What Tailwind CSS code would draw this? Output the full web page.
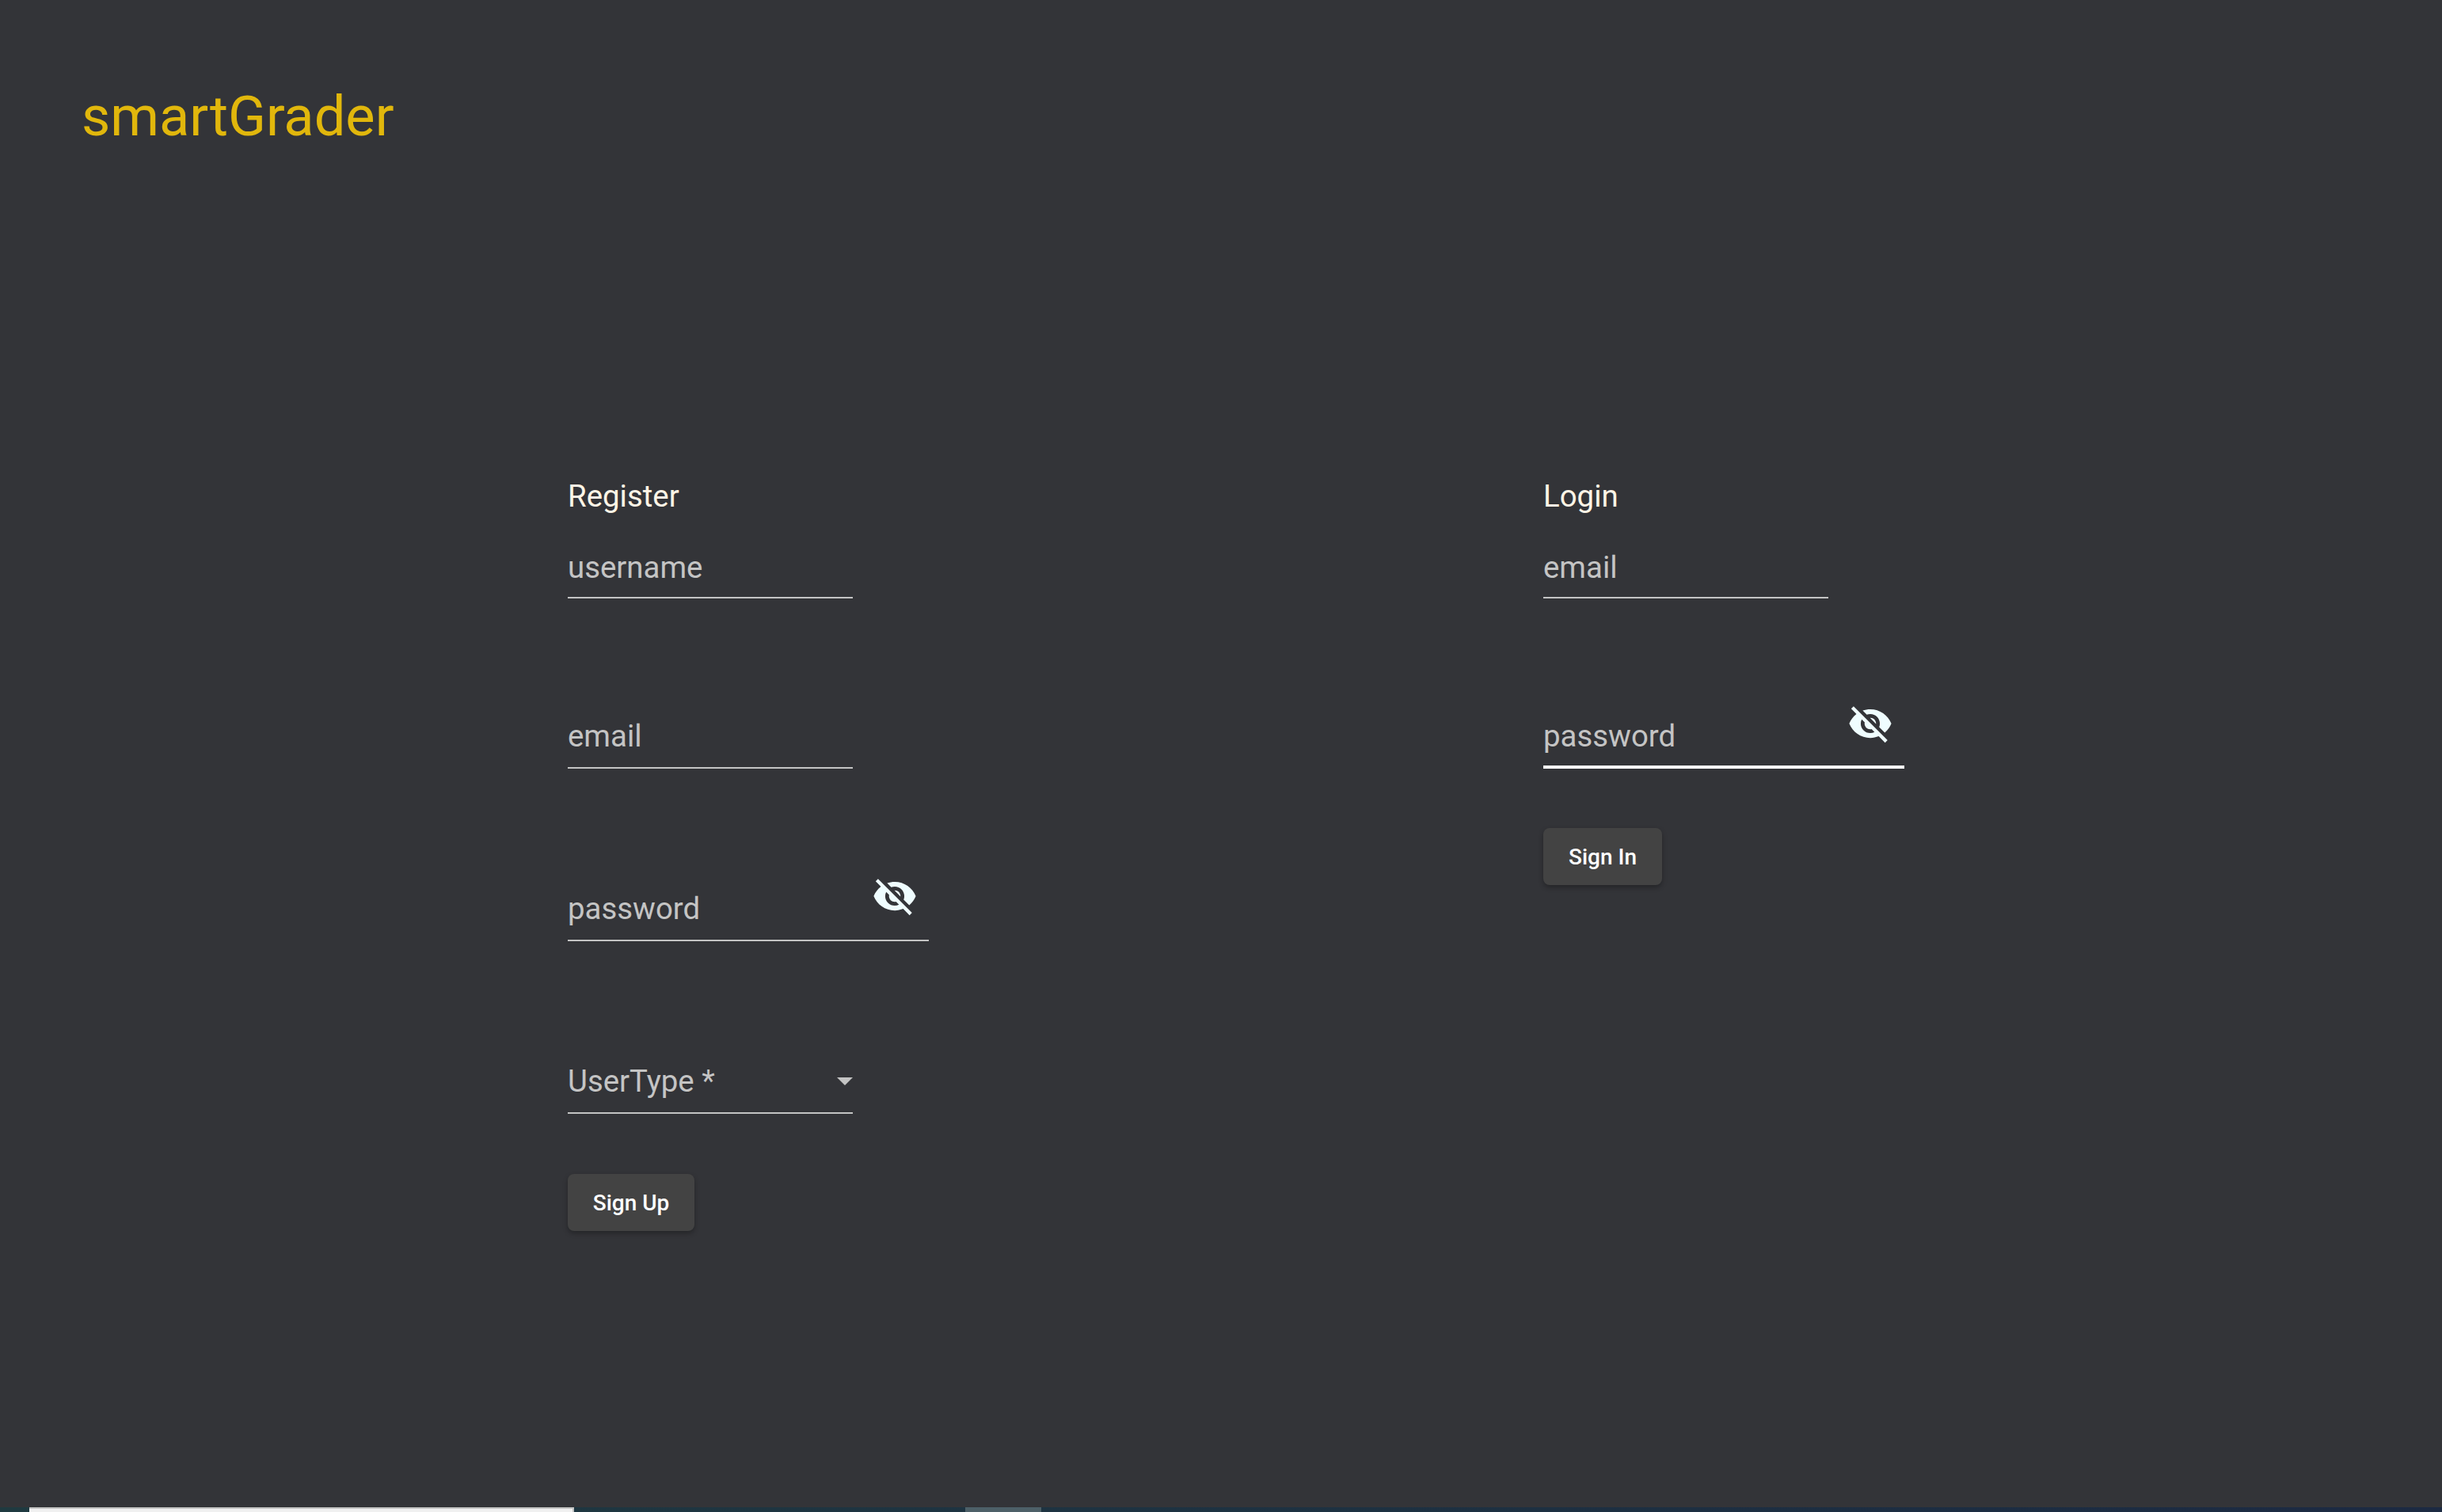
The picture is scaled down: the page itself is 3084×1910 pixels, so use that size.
<!DOCTYPE html>
<html lang="en">
<head>
    <meta charset="UTF-8">
    <title>smartGrader</title>
    <script src="https://cdn.jsdelivr.net/npm/@tailwindcss/browser@4"></script>
</head>
<body class="bg-[#333438] h-[1910px] overflow-hidden font-['Roboto',sans-serif] flex flex-col">
    <header class="h-[320px] pl-[103px] pt-[107px]">
        <h1 class="text-[70.4px] leading-[80px] font-normal text-[#e1b70c]">smartGrader</h1>
    </header>

    <main class="flex-1 flex pl-[717px] pt-[283px]">
        <!-- register -->
        <section class="w-[1232px]">
            <h2 class="text-[38.4px] leading-[48px] text-[#fff5e6] mb-[25px]">Register</h2>
            <div class="w-[360px] h-[80px] border-b-2 border-[#c4c4c4] pt-[17px] text-[38.4px] leading-[48px] text-[#c4c4c4]">username</div>
            <div class="w-[360px] h-[80px] mt-[135px] border-b-2 border-[#c4c4c4] pt-[15px] text-[38.4px] leading-[48px] text-[#c4c4c4]">email</div>
            <div class="relative w-[456px] h-[80px] mt-[138px] border-b-2 border-[#c4c4c4] pt-[15px] text-[38.4px] leading-[48px] text-[#c4c4c4]">
                password
                <svg class="absolute right-[14px] top-[-6px] w-[58px] h-[58px]" viewBox="0 0 24 24" fill="#effdff"><path d="M12 7c2.76 0 5 2.24 5 5 0 .65-.13 1.26-.36 1.83l2.92 2.92c1.51-1.26 2.7-2.89 3.43-4.75-1.73-4.39-6-7.5-11-7.5-1.4 0-2.74.25-3.98.7l2.16 2.16C10.74 7.13 11.35 7 12 7zM2 4.27l2.28 2.28.46.46C3.08 8.3 1.78 10.02 1 12c1.73 4.39 6 7.5 11 7.5 1.55 0 3.03-.3 4.38-.84l.42.42L19.73 22 21 20.73 3.27 3 2 4.27zM7.53 9.8l1.55 1.55c-.05.21-.08.43-.08.65 0 1.66 1.34 3 3 3 .22 0 .44-.03.65-.08l1.55 1.55c-.67.33-1.41.53-2.2.53-2.76 0-5-2.24-5-5 0-.79.2-1.53.53-2.2zm4.31-.78l3.15 3.15.02-.16c0-1.66-1.34-3-3-3l-.17.01z"/></svg>
            </div>
            <div class="relative w-[360px] h-[80px] mt-[138px] border-b-2 border-[#c4c4c4] pt-[15px] text-[38.4px] leading-[48px] text-[#c4c4c4]">
                UserType *
                <svg class="absolute right-[-14px] top-[14px] w-[48px] h-[48px]" viewBox="0 0 24 24" fill="#c4c4c4"><path d="M7 10l5 5 5-5z"/></svg>
            </div>
            <button class="mt-[76px] w-[160px] h-[72px] pt-[2px] rounded-[8px] bg-[#434343] text-white text-[28px] font-medium shadow-[0_3px_6px_rgba(0,0,0,0.3)]">Sign Up</button>
        </section>

        <!-- login -->
        <section>
            <h2 class="text-[38.4px] leading-[48px] text-[#fff5e6] mb-[25px]">Login</h2>
            <div class="w-[360px] h-[80px] border-b-2 border-[#c4c4c4] pt-[17px] text-[38.4px] leading-[48px] text-[#c4c4c4]">email</div>
            <div class="relative w-[456px] h-[80px] mt-[135px] border-b-4 border-white pt-[15px] text-[38.4px] leading-[48px] text-[#c4c4c4]">
                password
                <svg class="absolute right-[14px] top-[-6px] w-[58px] h-[58px]" viewBox="0 0 24 24" fill="#effdff"><path d="M12 7c2.76 0 5 2.24 5 5 0 .65-.13 1.26-.36 1.83l2.92 2.92c1.51-1.26 2.7-2.89 3.43-4.75-1.73-4.39-6-7.5-11-7.5-1.4 0-2.74.25-3.98.7l2.16 2.16C10.74 7.13 11.35 7 12 7zM2 4.27l2.28 2.28.46.46C3.08 8.3 1.78 10.02 1 12c1.73 4.39 6 7.5 11 7.5 1.55 0 3.03-.3 4.38-.84l.42.42L19.73 22 21 20.73 3.27 3 2 4.27zM7.53 9.8l1.55 1.55c-.05.21-.08.43-.08.65 0 1.66 1.34 3 3 3 .22 0 .44-.03.65-.08l1.55 1.55c-.67.33-1.41.53-2.2.53-2.76 0-5-2.24-5-5 0-.79.2-1.53.53-2.2zm4.31-.78l3.15 3.15.02-.16c0-1.66-1.34-3-3-3l-.17.01z"/></svg>
            </div>
            <button class="mt-[75px] w-[150px] h-[72px] pt-[2px] rounded-[8px] bg-[#434343] text-white text-[28px] font-medium shadow-[0_3px_6px_rgba(0,0,0,0.3)]">Sign In</button>
        </section>
    </main>

    <!-- strip along the bottom -->
    <div class="h-[6px] bg-linear-to-r from-[#1f3a40] to-[#1c2a42] flex">
        <div class="ml-[37px] w-[688px] bg-[#f0f0f0] border-t-2 border-r-2 border-[#c4c4c4]"></div>
        <div class="ml-[494px] w-[96px] bg-[#4d6068]"></div>
    </div>
</body>
</html>
